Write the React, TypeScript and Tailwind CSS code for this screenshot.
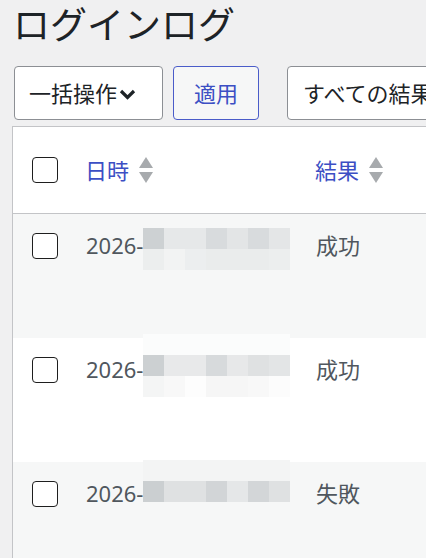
import React from 'react';

type Row = { result: string; striped: boolean; mosaic: string[][]; mosaicTop: number };

// pixelated cells covering the time part of each date
const rows: Row[] = [
    {
        result: '成功',
        striped: true,
        mosaicTop: 14,
        mosaic: [
            ['#cdd1d3', '#e6e8e9', '#e6e8e9', '#d8dbdd', '#e3e5e6', '#d8dbdd', '#e4e6e7'],
            ['#eceeee', '#f2f3f3', '#eceeef', '#eaecec', '#eaecec', '#eaecec', '#eceeee'],
        ],
    },
    {
        result: '成功',
        striped: false,
        mosaicTop: -4,
        mosaic: [
            ['#fbfcfc', '#fbfcfc', '#fbfcfc', '#fbfcfc', '#fbfcfc', '#fbfcfc', '#fbfcfc'],
            ['#ccd0d2', '#e8e9ea', '#e8e9ea', '#d7dadc', '#e7e8e9', '#dfe1e2', '#e3e5e6'],
            ['#f4f5f5', '#f8f8f8', '#fdfdfd', '#f6f6f6', '#f6f6f6', '#f8f8f8', '#fcfcfc'],
        ],
    },
    {
        result: '失敗',
        striped: true,
        mosaicTop: -2,
        mosaic: [
            ['#f3f4f4', '#f3f4f4', '#f3f4f4', '#f3f4f4', '#f3f4f4', '#f3f4f4', '#f3f4f4'],
            ['#cbcfd1', '#dfe1e2', '#dfe1e2', '#d2d5d7', '#e5e7e8', '#d3d6d8', '#dfe1e2'],
        ],
    },
];

const SortArrows = () => (
    <svg width="14" height="26" viewBox="0 0 14 26" className="shrink-0">
        <polygon points="7,0 14,11 0,11" fill="#a7aaad" />
        <polygon points="0,15 14,15 7,26" fill="#a7aaad" />
    </svg>
);

const Checkbox = () => (
    <span className="block w-[26px] h-[26px] rounded-[4px] border-[1.5px] border-[#1e1e1e] bg-white" />
);

export default function App() {
    return (
        <div
            className="w-[426px] h-[558px] overflow-hidden bg-[#f0f0f1] text-[#1d2327]"
            style={{ fontFamily: '"Noto Sans", "Noto Sans CJK JP", sans-serif' }}
        >
            <h1 className="pl-[13px] pt-[3px] text-[37px] leading-[44px] font-normal whitespace-nowrap">ログインログ</h1>

            {/* bulk actions + filter */}
            <div className="flex items-center pl-[14px] mt-[19px] h-[54px]">
                <div className="flex items-center shrink-0 h-[54px] w-[149px] pl-[14px] rounded-[4px] border border-[#8c8f94] bg-white text-[22px] whitespace-nowrap">
                    <span>一括操作</span>
                    <svg width="17" height="12" viewBox="0 0 17 12" className="ml-[2px] mt-[2px] shrink-0">
                        <polyline points="2,3 8.5,9.5 15,3" fill="none" stroke="#1d2327" strokeWidth="3.2" />
                    </svg>
                </div>
                <div className="flex items-center justify-center shrink-0 h-[54px] w-[86px] ml-[10px] rounded-[4px] border border-[#4a5cc9] bg-[#f6f7f7] text-[22px] text-[#3c4fc4] whitespace-nowrap">
                    適用
                </div>
                <div className="flex items-center shrink-0 h-[54px] w-[200px] ml-[28px] pl-[15px] rounded-[4px] border border-[#8c8f94] bg-white text-[22px] whitespace-nowrap">
                    すべての結果
                </div>
            </div>

            <div className="ml-[12px] mt-[6px] w-[600px] border-l border-t border-[#c3c4c7] bg-white">
                {/* header */}
                <div className="grid grid-cols-[72px_230px_1fr] items-center h-[87px] border-b border-[#c3c4c7]">
                    <div className="pl-[19px]"><Checkbox /></div>
                    <div className="flex items-center gap-[10px] text-[22px] text-[#3c4fc4]">
                        <span>日時</span>
                        <SortArrows />
                    </div>
                    <div className="flex items-center gap-[10px] text-[22px] text-[#3c4fc4]">
                        <span>結果</span>
                        <SortArrows />
                    </div>
                </div>

                {rows.map((row, i) => (
                    <div
                        key={i}
                        className={`grid grid-cols-[73px_230px_1fr] items-start h-[124px] ${row.striped ? 'bg-[#f6f7f7]' : 'bg-white'}`}
                    >
                        <div className="pl-[19px] pt-[19px]"><Checkbox /></div>
                        <div className="relative pt-[15px] text-[22px] leading-[32px] text-[#50575e]">
                            <span>2026-</span>
                            <div className="absolute left-[57px] grid grid-cols-[repeat(7,21px)]" style={{ top: row.mosaicTop }}>
                                {row.mosaic.flatMap((line, r) =>
                                    line.map((c, k) => (
                                        <span key={`${r}-${k}`} className="block h-[21px]" style={{ backgroundColor: c }} />
                                    ))
                                )}
                            </div>
                        </div>
                        <div className="pt-[15px] text-[22px] leading-[32px] text-[#50575e]">{row.result}</div>
                    </div>
                ))}
            </div>
        </div>
    );
}
